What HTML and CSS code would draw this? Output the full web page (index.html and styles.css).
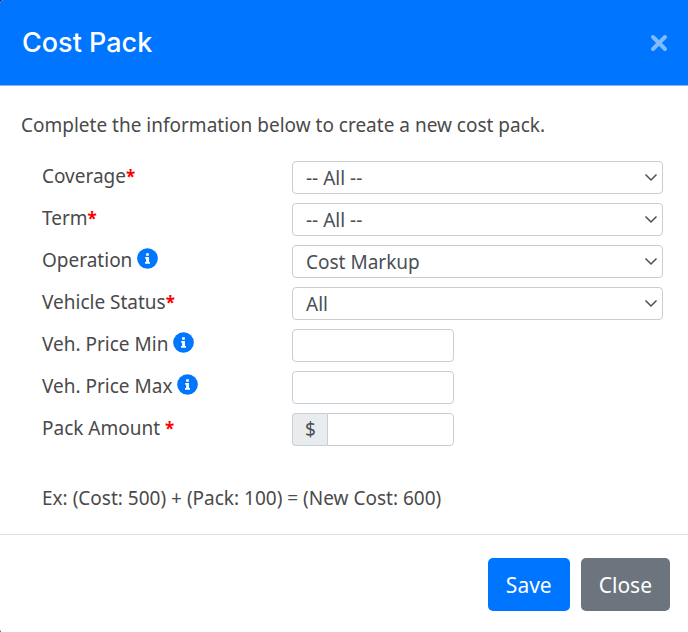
FILE: index.html
```html
<!DOCTYPE html>
<html lang="en">
	<head>
		<meta charset="UTF-8">
		<title>Cost Pack</title>
		<meta content="width=device-width,initial-scale=1.0" name="viewport">
		<link rel="stylesheet" href="styles.css">
	</head>
	<body>
		<form class="modal" role="dialog" aria-labelledby="modal-title">
			<div class="modal-header">
				<h1 class="modal-title" id="modal-title">Cost Pack</h1>
				<button type="button" class="close" aria-label="Close">
					<svg viewBox="0 0 18 18" width="18" height="18"><path d="M3 3L15 15M15 3L3 15"/></svg>
				</button>
			</div>

			<div class="modal-body">
				<p class="intro">Complete the information below to create a new cost pack.</p>
				<div class="fields">
					<div class="form-row">
						<label for="coverage">Coverage<span class="required">*</span></label>
						<select class="form-control" id="coverage"><option>-- All --</option></select>
					</div>
					<div class="form-row">
						<label for="term">Term<span class="required">*</span></label>
						<select class="form-control" id="term"><option>-- All --</option></select>
					</div>
					<div class="form-row">
						<label for="operation">Operation
							<svg class="info" viewBox="0 0 512 512"><circle cx="256" cy="256" r="252"/><path d="M222 126h66v62h-66zM200 220h92v122h24v40H196v-40h26v-82h-22z"/></svg>
						</label>
						<select class="form-control" id="operation"><option>Cost Markup</option></select>
					</div>
					<div class="form-row">
						<label for="status">Vehicle Status<span class="required">*</span></label>
						<select class="form-control" id="status"><option>All</option></select>
					</div>
					<div class="form-row">
						<label for="price-min">Veh. Price Min
							<svg class="info" viewBox="0 0 512 512"><circle cx="256" cy="256" r="252"/><path d="M222 126h66v62h-66zM200 220h92v122h24v40H196v-40h26v-82h-22z"/></svg>
						</label>
						<input type="text" class="form-control short" id="price-min">
					</div>
					<div class="form-row">
						<label for="price-max">Veh. Price Max
							<svg class="info" viewBox="0 0 512 512"><circle cx="256" cy="256" r="252"/><path d="M222 126h66v62h-66zM200 220h92v122h24v40H196v-40h26v-82h-22z"/></svg>
						</label>
						<input type="text" class="form-control short" id="price-max">
					</div>
					<div class="form-row">
						<label for="amount">Pack Amount <span class="required">*</span></label>
						<div class="input-group short">
							<span class="input-group-text">$</span>
							<input type="text" class="form-control" id="amount">
						</div>
					</div>
				</div>
				<p class="example">Ex: (Cost: 500) + (Pack: 100) = (New Cost: 600)</p>
			</div>

			<div class="modal-footer">
				<button type="submit" class="btn btn-primary">Save</button>
				<button type="button" class="btn btn-secondary">Close</button>
			</div>
		</form>
	</body>
</html>
```
FILE: styles.css
```css
* { box-sizing: border-box; }
body {
	margin: 0;
	background: #222;
	font-family: "Segoe UI", "Noto Sans", sans-serif;
	font-size: 19px;
	line-height: 28px;
	color: #4a4a4a;
}
.modal {
	min-height: 100vh;
	background: #fff;
	border-radius: 4px 0 0 4px;
	overflow: hidden;
}

/* header */
.modal-header {
	display: flex;
	align-items: center;
	justify-content: space-between;
	height: 86px;
	padding: 0 20px 0 22px;
	background: #0075ff;
	border-bottom: 1px solid #80baff;
}
.modal-title {
	margin: 0;
	font-family: Gilroy, Inter, sans-serif;
	font-size: 27px;
	font-weight: 500;
	line-height: 32px;
	color: #fff;
}
.close {
	display: flex;
	padding: 0;
	border: 0;
	background: none;
	cursor: pointer;
}
.close path {
	fill: none;
	stroke: #80baff;
	stroke-width: 4;
	stroke-linecap: round;
}

/* body */
.modal-body { padding: 25px 25px 22px 21px; }
.intro { margin: 0 0 22px; }
.fields {
	display: grid;
	gap: 9px;
	padding-left: 21px;
}
.form-row {
	display: grid;
	grid-template-columns: 250px 1fr;
	height: 33px;
}
.form-row label {
	padding-top: 1px;
	white-space: nowrap;
}
.required {
	color: #f00;
	font-size: 17px;
	font-weight: 700;
}
.info {
	width: 21px;
	height: 21px;
	vertical-align: -2px;
}
.info circle { fill: #0075ff; }
.info path { fill: #fff; }

.form-control {
	width: 100%;
	min-width: 0;
	height: 33px;
	padding: 0 13px;
	border: 1px solid #c8ced4;
	border-radius: 4px;
	background-color: #fff;
	font-family: inherit;
	font-size: 19px;
	color: #495057;
}
select.form-control {
	appearance: none;
	background-image: url("data:image/svg+xml,%3Csvg xmlns='http://www.w3.org/2000/svg' width='14' height='9'%3E%3Cpath d='M1.500 1.500l5.500 5.500 5.500-5.500' fill='none' stroke='%23495057' stroke-width='1.500'/%3E%3C/svg%3E");
	background-repeat: no-repeat;
	background-position: right 4px center;
}
.short { width: 162px; }
.input-group {
	display: flex;
	height: 33px;
}
.input-group-text {
	padding: 1px 11px 0 12px;
	border: 1px solid #c8ced4;
	border-right: 0;
	border-radius: 4px 0 0 4px;
	background: #e9ecef;
	color: #495057;
}
.input-group .form-control { border-radius: 0 4px 4px 0; }
.example {
	margin: 38px 0 0;
	padding-left: 21px;
}

/* footer */
.modal-footer {
	display: flex;
	justify-content: flex-end;
	gap: 11px;
	padding: 23px 18px 22px 17px;
	border-top: 1px solid #dee2e6;
}
.btn {
	height: 53px;
	padding: 0 18px;
	border: 0;
	border-radius: 5px;
	font-family: inherit;
	font-size: 21px;
	color: #fff;
	cursor: pointer;
}
.btn-primary { background: #0075ff; }
.btn-secondary { background: #6c757d; }
```
